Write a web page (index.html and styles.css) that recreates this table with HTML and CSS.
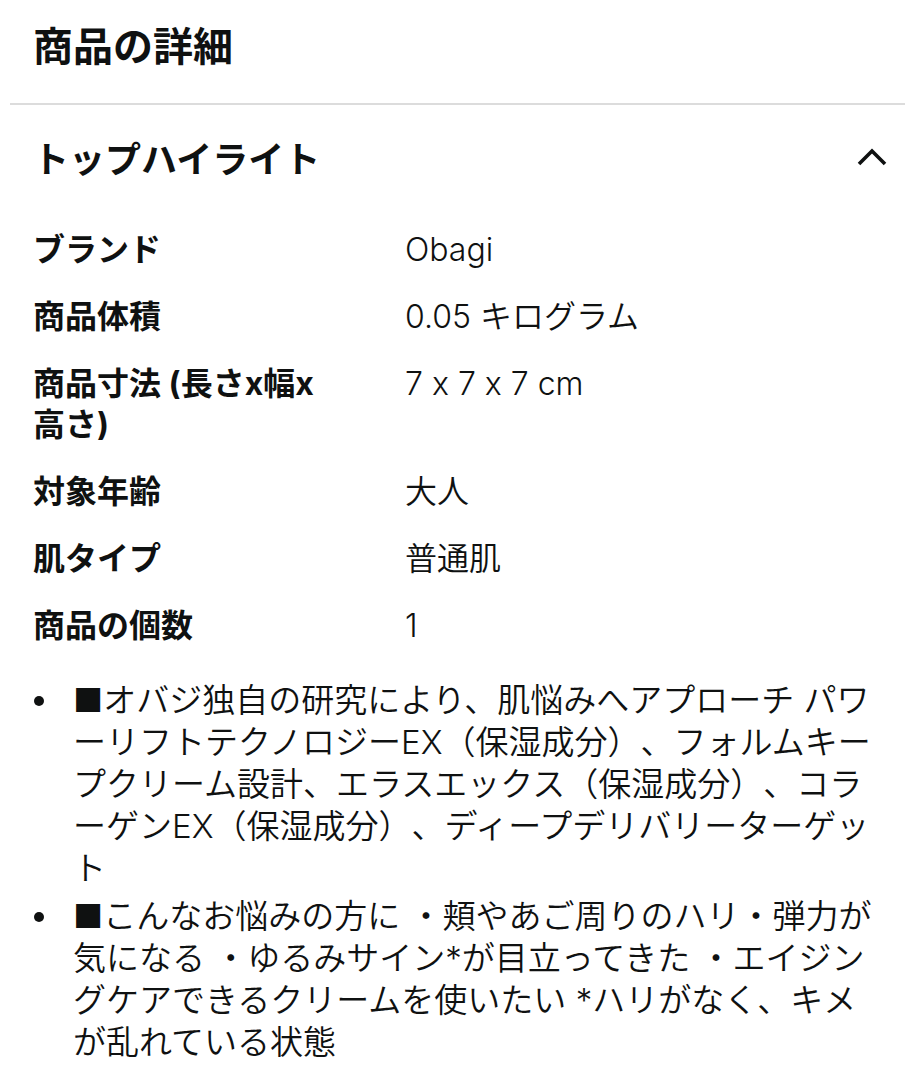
FILE: index.html
```html
<!DOCTYPE html>
<html lang="ja">
<head>
<meta charset="utf-8">
<title>商品の詳細</title>
<link rel="stylesheet" href="styles.css">
</head>
<body>
<div class="page">
  <h2 class="title">商品の詳細</h2>
  <div class="divider"></div>
  <section class="section">
    <div class="section-head">
      <h3 class="section-title">トップハイライト</h3>
      <svg class="chevron" width="32" height="20" viewBox="0 0 32 20" aria-hidden="true">
        <path d="M3 17 L16 4 L29 17" fill="none" stroke="#0f1111" stroke-width="3.6" stroke-linecap="butt" stroke-linejoin="miter"/>
      </svg>
    </div>
    <div class="specs">
      <div class="spec-label">ブランド</div>
      <div class="spec-value">Obagi</div>
      <div class="spec-label">商品体積</div>
      <div class="spec-value">0.05 キログラム</div>
      <div class="spec-label">商品寸法 (長さx幅x高さ)</div>
      <div class="spec-value">7 x 7 x 7 cm</div>
      <div class="spec-label">対象年齢</div>
      <div class="spec-value">大人</div>
      <div class="spec-label">肌タイプ</div>
      <div class="spec-value">普通肌</div>
      <div class="spec-label">商品の個数</div>
      <div class="spec-value">1</div>
    </div>
    <ul class="bullets">
      <li>■オバジ独自の研究により、肌悩みへアプローチ パワーリフトテクノロジーEX（保湿成分）、フォルムキープクリーム設計、エラスエックス（保湿成分）、コラーゲンEX（保湿成分）、ディープデリバリーターゲット</li>
      <li>■こんなお悩みの方に ・頬やあご周りのハリ・弾力が気になる ・ゆるみサイン*が目立ってきた ・エイジングケアできるクリームを使いたい *ハリがなく、キメが乱れている状態</li>
    </ul>
  </section>
</div>
</body>
</html>
```

FILE: styles.css
```css
* { box-sizing: border-box; }

body {
  margin: 0;
  background: #ffffff;
  color: #0f1111;
  font-family: Inter, "Noto Sans CJK JP", sans-serif;
  font-feature-settings: "calt" 0;
  text-spacing-trim: space-all;
}

.page {
  padding: 0 6px 0 10px;
}

.title {
  margin: 22px 0 0;
  padding-left: 23px;
  font-size: 40px;
  line-height: 50px;
  font-weight: 700;
}

.divider {
  margin-top: 31px;
  height: 2px;
  background: #dcdcdc;
}

.section {
  padding: 0 13px 0 23px;
}

.section-head {
  display: flex;
  align-items: center;
  justify-content: space-between;
  margin-top: 30px;
}

.section-title {
  margin: 0;
  font-size: 36px;
  line-height: 50px;
  font-weight: 700;
}

.chevron {
  display: block;
  margin-right: 4px;
  margin-top: -6px;
}

.specs {
  display: grid;
  grid-template-columns: 372px 1fr;
  row-gap: 26px;
  margin-top: 44px;
  font-size: 32px;
  line-height: 41px;
}

.spec-label {
  font-weight: 700;
  padding-right: 65px;
  line-break: loose;
}

.spec-value {
  font-weight: 350;
}

.bullets {
  list-style: none;
  margin: 33px 15px 0 0;
  padding: 0 0 0 40px;
  font-size: 33px;
  line-height: 42px;
  font-weight: 350;
  line-break: loose;
}

.bullets li {
  position: relative;
  margin-bottom: 6px;
}

.bullets li::before {
  content: "";
  position: absolute;
  left: -39px;
  top: 17px;
  width: 10px;
  height: 10px;
  border-radius: 50%;
  background: #0f1111;
}
```
